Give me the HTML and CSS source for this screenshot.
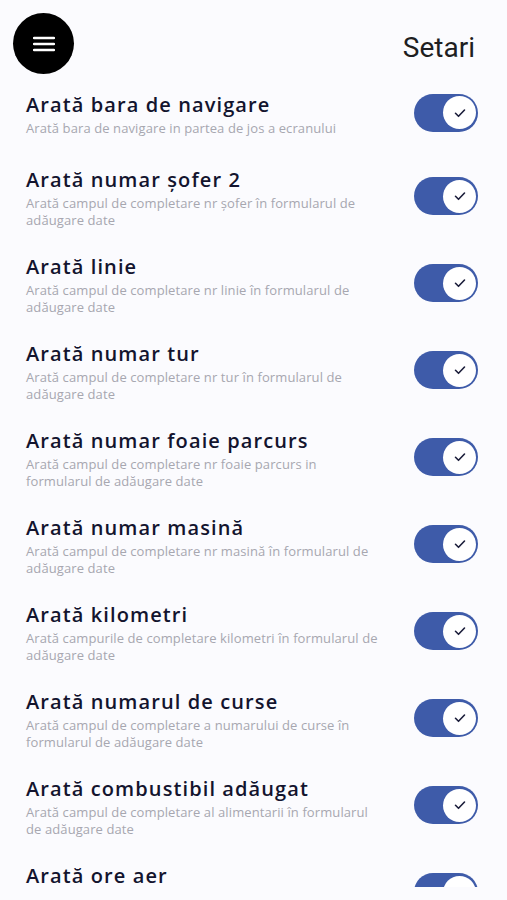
FILE: index.html
```html
<!DOCTYPE html>
<html lang="ro">
<head>
  <meta charset="UTF-8" />
  <meta name="viewport" content="width=device-width, initial-scale=1.0"/>
  <title>Setari</title>
  <link rel="stylesheet" href="styles.css">
</head>
<body>

  <div class="screen">
    <header class="topbar">
      <button class="menu-btn" aria-label="Meniu">
        <svg width="22" height="16" viewBox="0 0 22 16">
          <path d="M1 2h20M1 8h20M1 14h20" stroke="#fff" stroke-width="2.4" stroke-linecap="round"/>
        </svg>
      </button>
      <h1 class="page-title">Setari</h1>
    </header>

    <div class="settings" id="settings"></div>
  </div>

  <script>
    const settings = [
      ["Arată bara de navigare", "Arată bara de navigare in partea de jos a ecranului"],
      ["Arată numar şofer 2", "Arată campul de completare nr şofer în formularul de adăugare date"],
      ["Arată linie", "Arată campul de completare nr linie în formularul de adăugare date"],
      ["Arată numar tur", "Arată campul de completare nr tur în formularul de adăugare date"],
      ["Arată numar foaie parcurs", "Arată campul de completare nr foaie parcurs in formularul de adăugare date"],
      ["Arată numar masină", "Arată campul de completare nr masină în formularul de adăugare date"],
      ["Arată kilometri", "Arată campurile de completare kilometri în formularul de adăugare date"],
      ["Arată numarul de curse", "Arată campul de completare a numarului de curse în formularul de adăugare date"],
      ["Arată combustibil adăugat", "Arată campul de completare al alimentarii în formularul de adăugare date"],
      ["Arată ore aer", "Arată campul de completare ore aer în formularul de adăugare date"]
    ];

    const list = document.getElementById("settings");

    settings.forEach(([title, desc]) => {
      const row = document.createElement("div");
      row.className = "setting";
      row.innerHTML = `
        <div class="setting-text">
          <div class="setting-title">${title}</div>
          <div class="setting-desc">${desc}</div>
        </div>
        <label class="switch">
          <input type="checkbox" checked>
          <span class="track">
            <span class="knob">
              <svg width="14" height="14" viewBox="0 0 14 14">
                <path d="M2.5 7.3l3 3 6-6.3" fill="none" stroke="#1b1d3a" stroke-width="1.6" stroke-linecap="round" stroke-linejoin="round"/>
              </svg>
            </span>
          </span>
        </label>`;
      list.appendChild(row);
    });
  </script>

</body>
</html>
```

FILE: styles.css
```css
body {
  margin: 0;
  padding: 0;
  background-color: #fbfbfe;
  font-family: "Open Sans", "Noto Sans", sans-serif;
}

.screen {
  height: 900px;
  display: flex;
  flex-direction: column;
}

.topbar {
  display: flex;
  justify-content: space-between;
  align-items: flex-start;
  height: 75px;
  padding: 13px 32px 0 13px;
  box-sizing: border-box;
  flex-shrink: 0;
}

.menu-btn {
  width: 61px;
  height: 61px;
  border-radius: 50%;
  border: none;
  background-color: #000;
  display: flex;
  justify-content: center;
  align-items: center;
  padding: 0;
  cursor: pointer;
}

.page-title {
  margin: 21px 0 0;
  font-family: Roboto, sans-serif;
  font-weight: 400;
  font-size: 28px;
  line-height: 28px;
  color: #1e1e22;
}

.settings {
  height: 812px;
  overflow: hidden;
  flex-shrink: 0;
}

.setting {
  display: flex;
  justify-content: space-between;
  align-items: center;
  min-height: 80px;
  box-sizing: border-box;
  padding: 13px 29px 13px 26px;
}

.setting-text {
  width: 358px;
}

.setting-title {
  font-size: 20px;
  line-height: 24px;
  font-weight: 600;
  color: #13142e;
  letter-spacing: 1.1px;
}

.setting-desc {
  margin-top: 3px;
  font-size: 13px;
  line-height: 17px;
  color: #a7a7b0;
  letter-spacing: 0.1px;
}

.switch {
  margin-bottom: 5px;
  cursor: pointer;
}

.switch input {
  display: none;
}

.track {
  display: flex;
  justify-content: flex-end;
  align-items: center;
  width: 64px;
  height: 38px;
  padding: 0 2px;
  box-sizing: border-box;
  border-radius: 19px;
  background-color: #3e5ba9;
}

.knob {
  width: 33px;
  height: 33px;
  border-radius: 50%;
  background-color: #fff;
  display: flex;
  justify-content: center;
  align-items: center;
}
```
